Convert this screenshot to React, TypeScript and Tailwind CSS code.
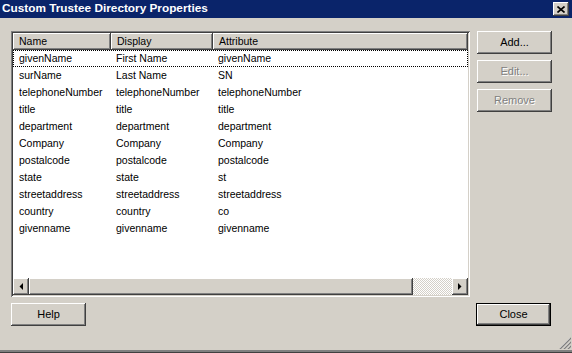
import React from 'react';

interface Field {
    name: string;
    display: string;
    attribute: string;
}

const fields: Field[] = [
    { name: 'givenName', display: 'First Name', attribute: 'givenName' },
    { name: 'surName', display: 'Last Name', attribute: 'SN' },
    { name: 'telephoneNumber', display: 'telephoneNumber', attribute: 'telephoneNumber' },
    { name: 'title', display: 'title', attribute: 'title' },
    { name: 'department', display: 'department', attribute: 'department' },
    { name: 'Company', display: 'Company', attribute: 'Company' },
    { name: 'postalcode', display: 'postalcode', attribute: 'postalcode' },
    { name: 'state', display: 'state', attribute: 'st' },
    { name: 'streetaddress', display: 'streetaddress', attribute: 'streetaddress' },
    { name: 'country', display: 'country', attribute: 'co' },
    { name: 'givenname', display: 'givenname', attribute: 'givenname' },
];

const raised = 'shadow-[inset_-1px_-1px_#404040,inset_1px_1px_#ffffff,inset_-2px_-2px_#808080,inset_2px_2px_#d4d0c8]';

const Button = ({ label, disabled, isDefault }: { label: string; disabled?: boolean; isDefault?: boolean }) => (
    <button
        className={
            'w-[75px] h-[23px] bg-[#d4d0c8] flex items-center justify-center text-[11px] ' +
            (isDefault ? 'border border-black shadow-[inset_-1px_-1px_#404040,inset_1px_1px_#ffffff,inset_-2px_-2px_#808080]' : raised) +
            (disabled ? ' text-[#808080] [text-shadow:1px_1px_#ffffff]' : ' text-black')
        }
    >
        {label}
    </button>
);

const HeaderCell = ({ label, width }: { label: string; width?: string }) => (
    <div className={'h-full flex items-center pl-[6px] ' + raised + ' ' + (width ?? 'flex-1')}>
        {label}
    </div>
);

const Arrow = ({ dir }: { dir: 'left' | 'right' }) => (
    <div className={'w-[16px] h-full flex items-center justify-center ' + raised}>
        <svg width="4" height="7" viewBox="0 0 4 7">
            {dir === 'left' ? <path d="M4 0 L4 7 L0.5 3.5 Z" fill="#000" /> : <path d="M0 0 L0 7 L3.5 3.5 Z" fill="#000" />}
        </svg>
    </div>
);

export default function App() {
    return (
        <div className="w-[572px] h-[353px] bg-[#d4d0c8] flex flex-col text-[10.5px] text-black font-['Liberation_Sans',Arial,sans-serif] overflow-hidden">
            <div className="h-[18px] bg-[#0a246a] flex items-center justify-between pl-[2px] pr-[3px] shrink-0">
                <span className="text-white font-bold text-[11.8px] leading-none">Custom Trustee Directory Properties</span>
                <div className={'w-[16px] h-[14px] bg-[#d4d0c8] flex items-center justify-center ' + raised}>
                    <svg width="8" height="7" viewBox="0 0 8 7">
                        <path d="M0.5 0.5 L7.5 6.5 M7.5 0.5 L0.5 6.5" stroke="#000" strokeWidth="1.6" />
                    </svg>
                </div>
            </div>

            <div className="flex-1 flex flex-col px-[11px] pt-[13px] gap-[6px] relative">
                <div className="flex gap-[7px]">
                    <div className="w-[459px] h-[266px] bg-white p-[2px] flex flex-col shadow-[inset_1px_1px_#808080,inset_-1px_-1px_#ffffff,inset_2px_2px_#404040,inset_-2px_-2px_#d4d0c8]">
                        <div className="h-[17px] flex bg-[#d4d0c8] shrink-0">
                            <HeaderCell label="Name" width="w-[98px]" />
                            <HeaderCell label="Display" width="w-[102px]" />
                            <HeaderCell label="Attribute" />
                        </div>
                        <div className="flex-1 flex flex-col">
                            {fields.map((f, i) => (
                                <div
                                    key={i}
                                    className={'h-[17px] flex items-center pt-[1px] ' + (i === 0 ? 'border border-dotted border-black' : 'border border-transparent')}
                                >
                                    <span className="w-[97px] pl-[5px] whitespace-nowrap">{f.name}</span>
                                    <span className="w-[102px] pl-[5px] whitespace-nowrap">{f.display}</span>
                                    <span className="flex-1 pl-[5px] whitespace-nowrap">{f.attribute}</span>
                                </div>
                            ))}
                        </div>
                        <div className="h-[17px] flex bg-[#d4d0c8] shrink-0">
                            <Arrow dir="left" />
                            <div className={'w-[384px] h-full ' + raised} />
                            <div className="flex-1 h-full bg-[repeating-conic-gradient(#d4d0c8_0%_25%,#ffffff_0%_50%)] bg-size-[2px_2px]" />
                            <Arrow dir="right" />
                        </div>
                    </div>
                    <div className="flex flex-col gap-[6px]">
                        <Button label="Add..." />
                        <Button label="Edit..." disabled />
                        <Button label="Remove" disabled />
                    </div>
                </div>
                <div className="flex justify-between w-[540px]">
                    <Button label="Help" />
                    <Button label="Close" isDefault />
                </div>
                <svg className="absolute right-[1px] bottom-[1px]" width="12" height="12" viewBox="0 0 12 12">
                    <path d="M11 1 L1 11 M11 5 L5 11 M11 9 L9 11" stroke="#ffffff" strokeWidth="1" />
                    <path d="M12 1 L1 12 M12 5 L5 12 M12 9 L9 12" stroke="#808080" strokeWidth="1.4" />
                </svg>
            </div>
            <div className="h-[3px] shrink-0 bg-[#808080] border-b border-[#404040]" />
        </div>
    );
}
